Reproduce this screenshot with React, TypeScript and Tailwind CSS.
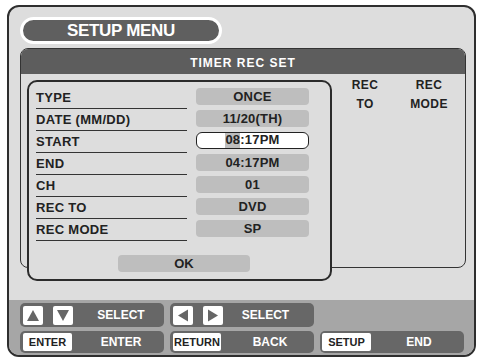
import React from "react";

const font = { fontFamily: '"Liberation Sans", Arial, sans-serif' };

const rows: { label: string; value: string; selected?: boolean }[] = [
  { label: "TYPE", value: "ONCE" },
  { label: "DATE (MM/DD)", value: "11/20(TH)" },
  { label: "START", value: "08:17PM", selected: true },
  { label: "END", value: "04:17PM" },
  { label: "CH", value: "01" },
  { label: "REC TO", value: "DVD" },
  { label: "REC MODE", value: "SP" },
];

function Tri({ dir }: { dir: "up" | "down" | "left" | "right" }) {
  const pts =
    dir === "up"
      ? "4,15 16,15 10,4"
      : dir === "down"
      ? "4,4 16,4 10,15"
      : dir === "left"
      ? "15,3.5 15,15.5 5,9.5"
      : "5,3.5 5,15.5 15,9.5";
  return (
    <div className="w-[20px] h-[19px] bg-white rounded-[2px] shrink-0">
      <svg width="20" height="19" viewBox="0 0 20 19">
        <polygon points={pts} fill="#666666" />
      </svg>
    </div>
  );
}

export default function App() {
  return (
    <div className="w-[479px] h-[359px] bg-white overflow-hidden" style={font}>
      <div className="ml-[7px] mt-[5px] w-[469px] h-[352px] border-2 border-[#2e2e2e] rounded-[12px] bg-[#dddddd] overflow-hidden flex flex-col">
        {/* Pill */}
        <div className="mt-[10px] ml-[11px] w-[202px] h-[27px] rounded-full border-[3px] border-white bg-[#5f5f5f] flex items-center justify-center shrink-0">
          <span className="text-white font-bold text-[17px] tracking-[-0.3px] leading-none">SETUP MENU</span>
        </div>

        {/* Panel */}
        <div className="mt-[4px] ml-[11px] w-[446px] h-[220px] border border-[#333] rounded-[8px] shrink-0 flex flex-col">
          <div className="h-[25px] bg-[#5d5d5d] rounded-t-[7px] flex items-center justify-center pt-[3px] shrink-0">
            <span className="text-white font-bold text-[12px] tracking-[1px] leading-none">TIMER REC SET</span>
          </div>
          <div className="flex flex-row items-start">
            {/* Popup */}
            <div className="ml-[6px] mt-[6px] w-[305px] h-[201px] border-2 border-[#2b2b2b] rounded-[10px] bg-[#dddddd] pt-[5px] pl-[7px] shrink-0">
              {rows.map((r) => (
                <div key={r.label} className="flex flex-row items-start h-[22px]">
                  <div className="w-[151px] h-[22px] border-b-[1.5px] border-[#333] pt-[1px] leading-[20px] text-[13px] font-bold tracking-[0.3px] text-[#222]">
                    {r.label}
                  </div>
                  {r.selected ? (
                    <div className="ml-[9px] mt-[1px] w-[113px] h-[17px] bg-white border-[1.5px] border-[#222] rounded-[6px] flex items-stretch justify-center text-[13px] font-bold tracking-[0.2px] text-[#222] leading-[14px] overflow-hidden">
                      <span className="bg-[#bdbdbd]">08</span>
                      <span>:17PM</span>
                    </div>
                  ) : (
                    <div className="ml-[9px] mt-[1px] w-[113px] h-[17px] bg-[#bebebe] rounded-[4px] text-center text-[13px] font-bold tracking-[0.2px] text-[#222] leading-[17px]">
                      {r.value}
                    </div>
                  )}
                </div>
              ))}
              <div className="mt-[14px] ml-[82px] w-[132px] h-[17px] bg-[#bebebe] rounded-[4px] text-center text-[13px] font-bold text-[#222] leading-[17px]">
                OK
              </div>
            </div>
            {/* Right columns */}
            <div className="ml-[8px] mt-[2px] w-[50px] text-center text-[12px] font-bold tracking-[0.4px] leading-[19px] text-[#222]">
              <div>REC</div>
              <div>TO</div>
            </div>
            <div className="ml-[14px] mt-[2px] w-[50px] text-center text-[12px] font-bold tracking-[0.4px] leading-[19px] text-[#222]">
              <div>REC</div>
              <div>MODE</div>
            </div>
          </div>
        </div>

        {/* Bottom bar */}
        <div className="mt-[32px] flex-1 bg-[#a6a6a6] pl-[11px] pt-[3px] flex flex-col">
          <div className="flex flex-row gap-[6px] h-[24px]">
            <div className="w-[144px] h-[24px] rounded-[5px] bg-[#676767] flex items-center pl-[3px]">
              <Tri dir="up" />
              <div className="ml-[10px]">
                <Tri dir="down" />
              </div>
              <span className="flex-1 text-center pl-[5px] text-white font-bold text-[12px] leading-none">SELECT</span>
            </div>
            <div className="w-[144px] h-[24px] rounded-[5px] bg-[#676767] flex items-center pl-[3px]">
              <Tri dir="left" />
              <div className="ml-[10px]">
                <Tri dir="right" />
              </div>
              <span className="flex-1 text-center pr-[6px] text-white font-bold text-[12px] leading-none">SELECT</span>
            </div>
          </div>
          <div className="flex flex-row gap-[6px] h-[22px] mt-[4px]">
            <div className="w-[144px] h-[22px] rounded-[5px] bg-[#676767] flex items-center pl-[3px]">
              <div className="w-[49px] h-[18px] bg-white rounded-[2px] flex items-center justify-center text-[11px] font-bold text-[#222] leading-none">ENTER</div>
              <span className="flex-1 text-center pl-[6px] text-white font-bold text-[12px] leading-none">ENTER</span>
            </div>
            <div className="w-[144px] h-[22px] rounded-[5px] bg-[#676767] flex items-center pl-[3px]">
              <div className="w-[48px] h-[18px] bg-white rounded-[2px] flex items-center justify-center text-[11px] font-bold text-[#222] leading-none">RETURN</div>
              <span className="flex-1 text-center pl-[5px] text-white font-bold text-[12px] leading-none">BACK</span>
            </div>
            <div className="w-[144px] h-[22px] rounded-[5px] bg-[#676767] flex items-center pl-[2px]">
              <div className="w-[49px] h-[18px] bg-white rounded-[2px] flex items-center justify-center text-[11px] font-bold text-[#222] leading-none">SETUP</div>
              <span className="flex-1 text-center pl-[3px] text-white font-bold text-[12px] leading-none">END</span>
            </div>
          </div>
        </div>
      </div>
    </div>
  );
}
